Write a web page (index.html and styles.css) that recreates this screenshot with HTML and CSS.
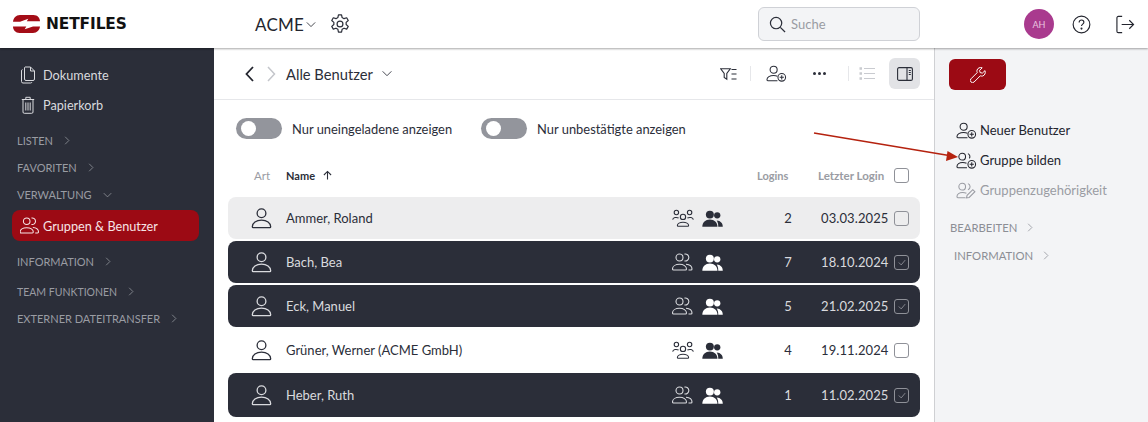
FILE: index.html
```html
<!DOCTYPE html>
<html lang="de">
<head>
<meta charset="utf-8">
<title>NETFILES</title>
<link rel="stylesheet" href="styles.css">
</head>
<body>
<svg class="defs" width="0" height="0">
  <symbol id="person" viewBox="0 0 24 24"><circle cx="12" cy="6.500" r="5" fill="none" stroke="currentColor" stroke-width="1.500"/><path d="M2.500 23h19a1 1 0 0 0 1-1c0-4.500-4.500-7.500-10.500-7.500S1.500 17.500 1.500 22a1 1 0 0 0 1 1z" fill="none" stroke="currentColor" stroke-width="1.500"/></symbol>
  <symbol id="two" viewBox="0 0 20 18"><circle cx="6.500" cy="4.500" r="3.500" fill="none" stroke="currentColor" stroke-width="1.100"/><path d="M11.500 1.100a3.500 3.500 0 1 1 0 6.800" fill="none" stroke="currentColor" stroke-width="1.100"/><path d="M1.500 17h11a1 1 0 0 0 1-1c0-2.800-3-4.700-7-4.700s-7 1.900-7 4.700a1 1 0 0 0 1 1z" fill="none" stroke="currentColor" stroke-width="1.100"/><path d="M13 11.200c3.400.2 6 2.100 6 4.800a1 1 0 0 1-1 1h-2.500" fill="none" stroke="currentColor" stroke-width="1.100"/></symbol>
  <symbol id="three" viewBox="0 0 20 16"><circle cx="10" cy="7" r="2.400" fill="none" stroke="currentColor"/><path d="M5.500 15.500h9c.4 0 .6-.3.6-.6 0-1.800-2.300-3.100-5.100-3.100s-5.100 1.300-5.100 3.100c0 .3.200.6.600.6z" fill="none" stroke="currentColor"/><circle cx="4" cy="3" r="2" fill="none" stroke="currentColor"/><circle cx="16" cy="3" r="2" fill="none" stroke="currentColor"/><path d="M.6 9.500C1 7.500 4 7 6 8M19.400 9.500C19 7.500 16 7 14 8" fill="none" stroke="currentColor"/></symbol>
  <symbol id="solid" viewBox="0 0 20 16"><circle cx="7.500" cy="4.300" r="3.800" fill="currentColor"/><circle cx="14.500" cy="5" r="3" fill="currentColor"/><path d="M.3 15.800c0-4 3-6.800 7.200-6.800s7.200 2.800 7.200 6.800z" fill="currentColor"/><path d="M15.500 15.800h4.300c0-3-2-5.600-5.800-5.800 1 1.500 1.500 3.500 1.500 5.800z" fill="currentColor"/></symbol>
  <symbol id="padd" viewBox="0 0 22 17"><circle cx="8" cy="4.500" r="3.700" fill="none" stroke="currentColor" stroke-width="1.100"/><path d="M12 11.300c-1.100-.5-2.500-.8-4-.8-4 0-7 2-7 4.600 0 .5.400.9.900.9H12" fill="none" stroke="currentColor" stroke-width="1.100"/><circle cx="16.500" cy="12.500" r="4" fill="none" stroke="currentColor" stroke-width="1.100"/><path d="M16.500 10.300v4.400M14.300 12.500h4.400" stroke="currentColor" stroke-width="1.100"/></symbol>
  <symbol id="gadd" viewBox="0 0 22 17"><circle cx="6.500" cy="4.500" r="3.500" fill="none" stroke="currentColor" stroke-width="1.100"/><path d="M12.500 1.300a3.400 3.400 0 0 1 1.500 5" fill="none" stroke="currentColor" stroke-width="1.100"/><path d="M11 11.300c-1.100-.5-2.500-.8-4-.8-3.500 0-6 2-6 4.600 0 .5.400.9.900.9H11.500" fill="none" stroke="currentColor" stroke-width="1.100"/><circle cx="16.500" cy="12.500" r="4" fill="none" stroke="currentColor" stroke-width="1.100"/><path d="M16.500 10.300v4.400M14.300 12.500h4.400" stroke="currentColor" stroke-width="1.100"/></symbol>
  <symbol id="gedit" viewBox="0 0 22 17"><circle cx="6.500" cy="4.500" r="3.500" fill="none" stroke="currentColor" stroke-width="1.100"/><path d="M12.500 1.300a3.400 3.400 0 0 1 0 6.400" fill="none" stroke="currentColor" stroke-width="1.100"/><path d="M10 16H1.900a.9.900 0 0 1-.9-.9c0-2.600 2.500-4.600 6-4.600 1.500 0 2.800.3 3.900.8" fill="none" stroke="currentColor" stroke-width="1.100"/><path d="M11 16.200l.6-2.600 6-6 2.200 2.200-6 6z" fill="none" stroke="currentColor" stroke-width="1.100"/></symbol>
  <symbol id="chev-r" viewBox="0 0 8 12"><path d="M1.500 1l5 5-5 5" fill="none" stroke="currentColor" stroke-width="1"/></symbol>
  <symbol id="chev-d" viewBox="0 0 12 8"><path d="M1 1.500l5 5 5-5" fill="none" stroke="currentColor" stroke-width="1"/></symbol>
</svg>

<header class="topbar">
  <div class="logo">
    <svg class="logo-mark" viewBox="0 0 27 18" width="27" height="18">
      <path d="M7 0h13.500C24.500 0 27 3 27 6.300H13.800l1.500-2.600L7 6.800H0C.3 3 3 0 7 0z" fill="#a40d17"/>
      <path d="M0 11.500h13.300l-1.600 2.800 8.300-2.800h7c-.3 3.500-3 6.500-7 6.500H6.500C2.500 18 0 15 0 11.500z" fill="#a40d17"/>
    </svg>
    <span class="logo-text">NETFILES</span>
  </div>
  <div class="tenant">
    <span>ACME</span>
    <svg class="tenant-chev" width="10" height="7"><use href="#chev-d"/></svg>
  </div>
  <svg class="gear" viewBox="0 0 24 24" width="22" height="22" fill="none" stroke="currentColor" stroke-width="1.300" stroke-linejoin="round"><path d="M10.300 2h3.400l.6 3 2.100 1.200 2.900-1 1.700 3-2.300 2v2.400l2.300 2-1.700 3-2.900-1-2.100 1.200-.6 3h-3.400l-.6-3-2.100-1.200-2.900 1-1.700-3 2.300-2v-2.400l-2.300-2 1.700-3 2.900 1L9.700 5z"/><circle cx="12" cy="12" r="3.200"/></svg>
  <div class="search">
    <svg viewBox="0 0 18 18" width="17" height="17" fill="none" stroke="#2b2e39" stroke-width="1.300"><circle cx="7.500" cy="7.500" r="6"/><path d="M12 12l5 5"/></svg>
    <span>Suche</span>
  </div>
  <div class="top-actions">
    <div class="avatar">AH</div>
    <svg viewBox="0 0 20 20" width="19" height="19" fill="none" stroke="currentColor" stroke-width="1.200"><circle cx="10" cy="10" r="8.800"/><path d="M7.500 7.800c0-1.500 1.100-2.500 2.500-2.500s2.500 1 2.500 2.300c0 2-2.500 2-2.500 4"/><circle cx="10" cy="14.300" r=".5" fill="currentColor"/></svg>
    <svg viewBox="0 0 20 20" width="20" height="19" fill="none" stroke="currentColor" stroke-width="1.200"><path d="M7 1.500H3A1.500 1.500 0 0 0 1.500 3v14A1.500 1.500 0 0 0 3 18.500h4M6.500 10h12.500M14.500 5.500L19 10l-4.500 4.500"/></svg>
  </div>
</header>

<div class="shell">
  <aside class="sidebar">
    <a class="nav-main nav-first">
      <svg viewBox="0 0 16 18" width="16" height="18" fill="none" stroke="currentColor" stroke-width="1"><path d="M5 1h5.500L14.500 5v8a1.500 1.500 0 0 1-1.500 1.500H6A1.500 1.500 0 0 1 4.500 13V1.500z"/><path d="M10.500 1v4h4M2.500 3.500A1.500 1.500 0 0 0 1.500 5v10.500A1.500 1.500 0 0 0 3 17h7.500a1.500 1.500 0 0 0 1.500-1"/></svg>
      <span>Dokumente</span>
    </a>
    <a class="nav-main nav-trash">
      <svg viewBox="0 0 14 18" width="14" height="18" fill="none" stroke="currentColor" stroke-width="1"><path d="M.8 3.500h12.400M4.800 3.500V1.300h4.400v2.200M2 3.500V16a1.300 1.300 0 0 0 1.300 1.300h7.400A1.300 1.300 0 0 0 12 16V3.500M4.800 6.500v8M7 6.500v8M9.200 6.500v8"/></svg>
      <span>Papierkorb</span>
    </a>
    <div class="nav-head nav-listen">LISTEN<svg width="6" height="9"><use href="#chev-r"/></svg></div>
    <div class="nav-head">FAVORITEN<svg width="6" height="9"><use href="#chev-r"/></svg></div>
    <div class="nav-head">VERWALTUNG<svg width="9" height="6"><use href="#chev-d"/></svg></div>
    <a class="nav-active">
      <svg width="20" height="17"><use href="#two"/></svg>
      <span>Gruppen &amp; Benutzer</span>
    </a>
    <div class="nav-head nav-info">INFORMATION<svg width="6" height="9"><use href="#chev-r"/></svg></div>
    <div class="nav-head nav-team">TEAM FUNKTIONEN<svg width="6" height="9"><use href="#chev-r"/></svg></div>
    <div class="nav-head">EXTERNER DATEITRANSFER<svg width="6" height="9"><use href="#chev-r"/></svg></div>
  </aside>

  <main class="content">
    <div class="toolbar">
      <svg class="back" width="9" height="16" viewBox="0 0 9 16"><path d="M8 1L1.500 8 8 15" fill="none" stroke="#23252e" stroke-width="1.800"/></svg>
      <svg class="forward" width="9" height="16" viewBox="0 0 9 16"><path d="M1 1l6.500 7L1 15" fill="none" stroke="#c4c6cb" stroke-width="1.500"/></svg>
      <span class="crumb">Alle Benutzer</span>
      <svg class="crumb-chev" width="12" height="7"><use href="#chev-d"/></svg>
      <div class="tools">
        <svg class="tool-filter" viewBox="0 0 17 14" width="17" height="14" fill="none" stroke="#2b2e39" stroke-width="1.100"><path d="M.7 1.700h9.600L6.800 6.500v5.800L4.200 10.500v-4zM11.500 2.500h5M11.500 7h5M11.500 12h5"/></svg>
        <i class="sep"></i>
        <svg class="tool-add" width="21" height="17"><use href="#padd"/></svg>
        <span class="dots"><i></i><i></i><i></i></span>
        <i class="sep"></i>
        <svg class="tool-list" viewBox="0 0 16 13" width="16" height="13" fill="none" stroke="#c9cbd0" stroke-width="1"><path d="M5 1.500h11M5 6.500h11M5 11.500h11"/><path d="M.5 1.500h2.500M.5 6.500h2.500M.5 11.500h2.500" stroke-width="2.400"/></svg>
        <span class="tool-panel">
          <svg viewBox="0 0 16 14" width="16" height="14" fill="none" stroke="#2b2e39" stroke-width="1.100"><rect x=".6" y=".6" width="14.800" height="12.800" rx="1.500"/><path d="M10 .6v12.800"/><path d="M11.800 3.500h2M11.800 5.500h2M11.800 7.500h2" stroke-width="1"/></svg>
        </span>
      </div>
    </div>

    <div class="filters">
      <label class="toggle-item"><span class="toggle"></span>Nur uneingeladene anzeigen</label>
      <label class="toggle-item"><span class="toggle"></span>Nur unbestätigte anzeigen</label>
    </div>

    <div class="thead">
      <span class="c-art">Art</span>
      <span class="c-name name-head">Name<svg viewBox="0 0 10 10" width="9" height="10" fill="none" stroke="#2b2e39" stroke-width="1.200"><path d="M5 10V1M1 5l4-4 4 4"/></svg></span>
      <span class="c-logins">Logins</span>
      <span class="c-date">Letzter Login</span>
      <span class="check head-check"></span>
    </div>

    <div class="rows">
      <div class="row row-hover">
        <svg class="c-art-icon" width="21" height="24"><use href="#person"/></svg>
        <span class="c-name">Ammer, Roland</span>
        <svg class="i-group" width="22" height="18"><use href="#three"/></svg>
        <svg class="i-solid" width="21" height="17"><use href="#solid"/></svg>
        <span class="c-logins">2</span>
        <span class="c-date">03.03.2025</span>
        <span class="check"></span>
      </div>
      <div class="row row-sel">
        <svg class="c-art-icon" width="21" height="24"><use href="#person"/></svg>
        <span class="c-name">Bach, Bea</span>
        <svg class="i-group" width="22" height="18"><use href="#two"/></svg>
        <svg class="i-solid" width="21" height="17"><use href="#solid"/></svg>
        <span class="c-logins">7</span>
        <span class="c-date">18.10.2024</span>
        <span class="check checked"><svg viewBox="0 0 10 8" width="8" height="7" fill="none" stroke="currentColor"><path d="M1 4l3 3 5-6"/></svg></span>
      </div>
      <div class="row row-sel">
        <svg class="c-art-icon" width="21" height="24"><use href="#person"/></svg>
        <span class="c-name">Eck, Manuel</span>
        <svg class="i-group" width="22" height="18"><use href="#two"/></svg>
        <svg class="i-solid" width="21" height="17"><use href="#solid"/></svg>
        <span class="c-logins">5</span>
        <span class="c-date">21.02.2025</span>
        <span class="check checked"><svg viewBox="0 0 10 8" width="8" height="7" fill="none" stroke="currentColor"><path d="M1 4l3 3 5-6"/></svg></span>
      </div>
      <div class="row">
        <svg class="c-art-icon" width="21" height="24"><use href="#person"/></svg>
        <span class="c-name">Grüner, Werner (ACME GmbH)</span>
        <svg class="i-group" width="22" height="18"><use href="#three"/></svg>
        <svg class="i-solid" width="21" height="17"><use href="#solid"/></svg>
        <span class="c-logins">4</span>
        <span class="c-date">19.11.2024</span>
        <span class="check"></span>
      </div>
      <div class="row row-sel">
        <svg class="c-art-icon" width="21" height="24"><use href="#person"/></svg>
        <span class="c-name">Heber, Ruth</span>
        <svg class="i-group" width="22" height="18"><use href="#two"/></svg>
        <svg class="i-solid" width="21" height="17"><use href="#solid"/></svg>
        <span class="c-logins">1</span>
        <span class="c-date">11.02.2025</span>
        <span class="check checked"><svg viewBox="0 0 10 8" width="8" height="7" fill="none" stroke="currentColor"><path d="M1 4l3 3 5-6"/></svg></span>
      </div>
    </div>
  </main>

  <aside class="panel">
    <button class="wrench" type="button">
      <svg viewBox="0 0 16 16" width="16" height="16" fill="none" stroke="#fff" stroke-width="1" stroke-linejoin="round"><path d="M15 3.600l-2.600 2.500-2.300-.5-.5-2.300L12.200.8C10 0 7.600 1 7 3.200c-.2.800-.1 1.700.2 2.400L1 11.800a2.200 2.200 0 0 0 3.100 3.200l6.200-6.200c.8.300 1.600.4 2.400.2C14.800 8.400 15.800 6 15 3.600z"/></svg>
    </button>
    <div class="actions">
      <div class="action"><svg width="21" height="17"><use href="#padd"/></svg>Neuer Benutzer</div>
      <div class="action"><svg width="21" height="17"><use href="#gadd"/></svg>Gruppe bilden</div>
      <div class="action action-off"><svg width="21" height="17"><use href="#gedit"/></svg>Gruppenzugehörigkeit</div>
    </div>
    <div class="panel-head">BEARBEITEN<svg width="6" height="9"><use href="#chev-r"/></svg></div>
    <div class="panel-head panel-info">INFORMATION<svg width="6" height="9"><use href="#chev-r"/></svg></div>
  </aside>
</div>

<svg class="arrow" width="150" height="32" viewBox="0 0 150 32">
  <path d="M1 2L136 24.500" stroke="#b5220f" stroke-width="1.600" fill="none"/>
  <path d="M145 26l-12 4 1.500-10z" fill="#b5220f"/>
</svg>
</body>
</html>
```

FILE: styles.css
```css
* { box-sizing: border-box; }
html, body { margin: 0; height: 422px; overflow: hidden; }
body { font-family: "Lato", "Open Sans", sans-serif; font-size: 13px; color: #2b2e39; background: #fff; position: relative; }
.defs { position: absolute; }
svg { display: block; flex: none; }

.topbar { height: 48px; display: flex; align-items: center; background: #fff; position: relative; z-index: 2; box-shadow: 0 1px 2px rgba(0,0,0,.35); color: #23252e; }
.logo { width: 255px; padding-left: 13px; display: flex; align-items: center; gap: 6px; }
.logo-text { font-family: "DejaVu Sans", sans-serif; font-weight: 700; font-size: 15.400px; letter-spacing: -.1px; color: #111; }
.tenant { display: flex; align-items: center; gap: 2px; font-size: 17px; width: 74px; letter-spacing: .2px; }
.tenant-chev { margin-top: 1px; }
.gear { color: #2b2e39; }
.search { margin-left: 407px; width: 162px; height: 34px; background: #f3f4f6; border: 1px solid #cfd1d6; border-radius: 6px; display: flex; align-items: center; gap: 5px; padding-left: 10px; color: #9a9ca3; font-size: 13px; }
.top-actions { margin-left: 104px; display: flex; align-items: center; color: #23252e; }
.avatar { width: 30px; height: 30px; border-radius: 50%; background: #a93a8e; color: #e9c6e0; font-size: 9px; display: flex; align-items: center; justify-content: center; }
.top-actions svg:nth-child(2) { margin-left: 18px; }
.top-actions svg:nth-child(3) { margin-left: 24px; }

.shell { display: flex; height: 374px; }
.sidebar { width: 214px; flex: none; background: #2b2e39; color: #d9dade; }
.nav-main { display: flex; align-items: center; gap: 7px; height: 30px; padding-left: 20px; font-size: 12.700px; }
.nav-first { margin-top: 12px; }
.nav-trash { padding-left: 21px; gap: 8px; }
.nav-head { display: flex; align-items: center; gap: 11px; height: 27px; padding-left: 17px; font-size: 11px; color: #9a9ca3; }
.nav-listen { margin-top: 7px; }
.nav-active { display: flex; align-items: center; gap: 3px; height: 31px; margin: 2px 15px 0 12px; padding-left: 8px; background: #9c0a14; border-radius: 8px; color: #f6e4e5; font-size: 12.700px; }
.nav-info { margin-top: 7px; }
.nav-team { margin-top: 3px; font-size: 10.500px; }

.content { width: 720px; flex: none; }
.toolbar { height: 52px; border-bottom: 1px solid #e6e7ea; display: flex; align-items: center; padding: 0 14px 0 31px; }
.forward { margin-left: 13px; }
.crumb { margin-left: 10px; font-size: 14.700px; }
.crumb-chev { margin-left: 8px; color: #2b2e39; }
.tools { margin-left: auto; display: flex; align-items: center; }
.sep { width: 1px; height: 15px; background: #e6e7ea; margin: 0 14px 0 13px; }
.tool-add { color: #2b2e39; margin-left: 1px; }
.dots { display: flex; gap: 2px; margin-left: 26px; margin-right: 9px; }
.dots i { width: 3px; height: 3px; border-radius: 50%; background: #2b2e39; }
.sep + .tool-list { margin-left: -4px; }
.tool-panel { width: 31px; height: 31px; margin-left: 14px; background: #e2e3e6; border-radius: 6px; display: flex; align-items: center; justify-content: center; }

.filters { display: flex; gap: 29px; padding: 18px 0 0 22px; }
.toggle-item { display: flex; align-items: center; gap: 10px; font-size: 12.900px; height: 21px; }
.toggle { width: 46px; height: 21px; background: #93959c; border-radius: 11px; position: relative; display: block; }
.toggle::before { content: ""; position: absolute; left: 5px; top: 3px; width: 15px; height: 15px; border-radius: 50%; background: #fff; }

.thead, .row { display: flex; align-items: center; }
.thead { height: 24px; margin: 24px 14px 0 14px; font-size: 11.500px; color: #9a9ca3; font-weight: 700; }
.c-art { width: 58px; padding-left: 26px; font-weight: 400; }
.thead .c-name { flex: 1; font-size: 11px; }
.c-logins { width: 30px; text-align: center; }
.thead .c-logins { width: 61px; font-size: 11px; text-align: left; }
.thead .c-date { width: 76px; text-align: left; }
.name-head { display: flex; align-items: center; gap: 8px; color: #2b2e39; }
.check { width: 15px; height: 15px; border: 1px solid #8f9198; border-radius: 3px; display: flex; align-items: center; justify-content: center; flex: none; }
.head-check { margin-right: 11px; }

.rows { margin: 10px 14px 0; display: flex; flex-direction: column; gap: 2px; }
.row { height: 42px; border-radius: 8px; font-size: 13px; }
.row:last-child { height: 44px; }
.row .c-art-icon { margin-left: 23px; margin-right: 14px; }
.row .c-name { flex: 1; }
.i-group { margin-right: 8px; }
.row .c-logins { margin-left: 50px; width: 30px; font-size: 13px; }
.row .c-date { width: 72px; margin-left: 18px; font-size: 13px; letter-spacing: .1px; }
.row .check { margin-left: 1px; margin-right: 11px; }
.row-hover { background: #ededee; }
.row-sel { background: #2b2e39; color: #d9dade; }
.row-sel .i-solid { color: #fff; }
.row-sel .check { border-color: #8f9198; color: #9a9ca3; }

.panel { flex: 1; background: #f3f4f6; border-left: 1px solid #cfd0d3; padding: 11px 0 0 15px; }
.wrench { width: 57px; height: 31px; margin-left: -1px; background: #9c0a14; border: 0; border-radius: 6px; display: flex; align-items: center; justify-content: center; padding: 0; }
.actions { margin-top: 25px; margin-left: 6px; display: flex; flex-direction: column; }
.action { display: flex; align-items: center; gap: 3px; height: 30px; font-size: 13px; color: #23252e; }
.action-off { color: #9a9ca3; }
.panel-head { display: flex; align-items: center; gap: 10px; font-size: 11.300px; color: #8c8e95; height: 28px; margin-top: 8px; }
.panel-info { margin-top: 0; padding-left: 4px; }

.arrow { position: absolute; left: 813px; top: 131px; z-index: 3; }
```
